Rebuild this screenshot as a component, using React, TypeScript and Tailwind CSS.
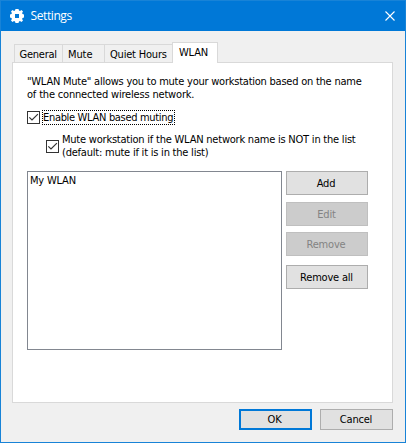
import React from "react";

const base = "font-['DejaVu_Sans_Condensed','DejaVu_Sans',sans-serif] text-[11px] leading-[13px] text-black whitespace-nowrap";
const condensed = "[font-stretch:condensed]";

function Check() {
  return (
    <span className="block h-[13px] w-[13px] shrink-0 border border-[#333333] bg-white">
      <svg width="11" height="11" viewBox="0 0 11 11" className="block">
        <path d="M1.3 5.3 L4 8 L9.9 2.1" fill="none" stroke="#333" strokeWidth="1.2" />
      </svg>
    </span>
  );
}

function Button({ label, className }: { label: string; className: string }) {
  return <button className={"flex items-center justify-center " + className}>{label}</button>;
}

export default function App() {
  return (
    <div className={"flex h-[443px] w-[406px] flex-col border border-[#1883d7] bg-[#f0f0f0] " + base}>
      <header className="flex h-[30px] shrink-0 items-center bg-[#0078d7] pl-[9px] pr-[10px]">
        <svg width="14" height="14" viewBox="0 0 14 14" className="block">
          <path
            fill="#fff"
            fillRule="evenodd"
            d="M5.5 0h3L9 1.5l1 .4L11.5 1 13 2.5 12.100 4l.4 1 1.500.500v3L12.500 9l-.4 1 .900 1.500L11.500 13 10 12.100l-1 .4L8.500 14h-3L5 12.500l-1-.4L2.500 13 1 11.500 1.900 10l-.4-1L0 8.500v-3L1.500 5l.4-1L1 2.500 2.500 1 4 1.900l1-.4zM5 5v4h4V5z"
          />
        </svg>
        <span className="ml-[6.500px] font-['Open_Sans',sans-serif] text-[12px] leading-[16px] tracking-[-0.4px] text-white">Settings</span>
        <svg width="10" height="10" viewBox="0 0 10 10" className="ml-auto block">
          <path d="M0.5 0.5 L9.5 9.5 M9.5 0.5 L0.5 9.5" stroke="#fff" strokeWidth="1.1" />
        </svg>
      </header>

      <div className={"flex flex-col " + condensed}>
        <nav className="mt-[11px] flex h-[20px] shrink-0 items-end pl-[13px]">
          <div className="h-[18px] w-[48px] border-l border-t border-[#d9d9d9] pl-[4.500px] pt-[3px] tracking-[-0.25px]">General</div>
          <div className="h-[18px] w-[42px] border-l border-t border-[#d9d9d9] pl-[5px] pt-[3px] tracking-[-0.1px]">Mute</div>
          <div className="h-[18px] w-[68px] border-l border-t border-[#d9d9d9] pl-[5px] pt-[3px] tracking-[-0.2px]">Quiet Hours</div>
          <div className="relative -mb-px h-[21px] w-[46px] border-x border-t border-[#d9d9d9] bg-white pl-[6px] pt-[3px] tracking-[-0.2px]">WLAN</div>
        </nav>

        <main className="ml-[11px] mr-[12px] h-[341px] shrink-0 border border-[#d9d9d9] bg-white pl-[14px] pt-[12px]">
          <p className="tracking-[-0.235px]">"WLAN Mute" allows you to mute your workstation based on the name</p>
          <p className="tracking-[-0.18px]">of the connected wireless network.</p>
          <label className="mt-[9px] flex h-[15px] items-center gap-[2px]">
            <Check />
            <span className="h-[15px] w-[133px] border border-dotted border-black tracking-[-0.32px]">Enable WLAN based muting</span>
          </label>
          <label className="ml-[19px] mt-[8px] flex items-center gap-[3px]">
            <Check />
            <span className="tracking-[-0.22px]">
              Mute workstation if the WLAN network name is NOT in the list
              <br />
              (default: mute if it is in the list)
            </span>
          </label>
          <div className="mt-[12px] flex gap-[4px]">
            <div className="h-[179px] w-[255px] border border-[#828790] pl-[2px] pt-[2px] tracking-[-0.2px]">My WLAN</div>
            <div className="flex flex-col tracking-[-0.2px]">
              <Button label="Add" className="h-[24px] w-[82px] border border-[#adadad] bg-[#e1e1e1] pr-[2px]" />
              <Button label="Edit" className="mt-[7px] h-[24px] w-[82px] border border-[#bfbfbf] bg-[#cccccc] pr-px text-[#838383]" />
              <Button label="Remove" className="mt-[6px] h-[24px] w-[82px] border border-[#bfbfbf] bg-[#cccccc] pr-[2px] text-[#838383]" />
              <Button label="Remove all" className="mt-[9px] h-[24px] w-[82px] border border-[#adadad] bg-[#e1e1e1] pr-px" />
            </div>
          </div>
        </main>

        <footer className="mt-[6px] flex justify-end gap-[8px] pr-[12px] tracking-[-0.2px]">
          <Button label="OK" className="h-[21px] w-[73px] border-2 border-[#0078d7] bg-[#e1e1e1] pr-[2px]" />
          <Button label="Cancel" className="h-[21px] w-[73px] border border-[#adadad] bg-[#e1e1e1] pr-px" />
        </footer>
      </div>
    </div>
  );
}
